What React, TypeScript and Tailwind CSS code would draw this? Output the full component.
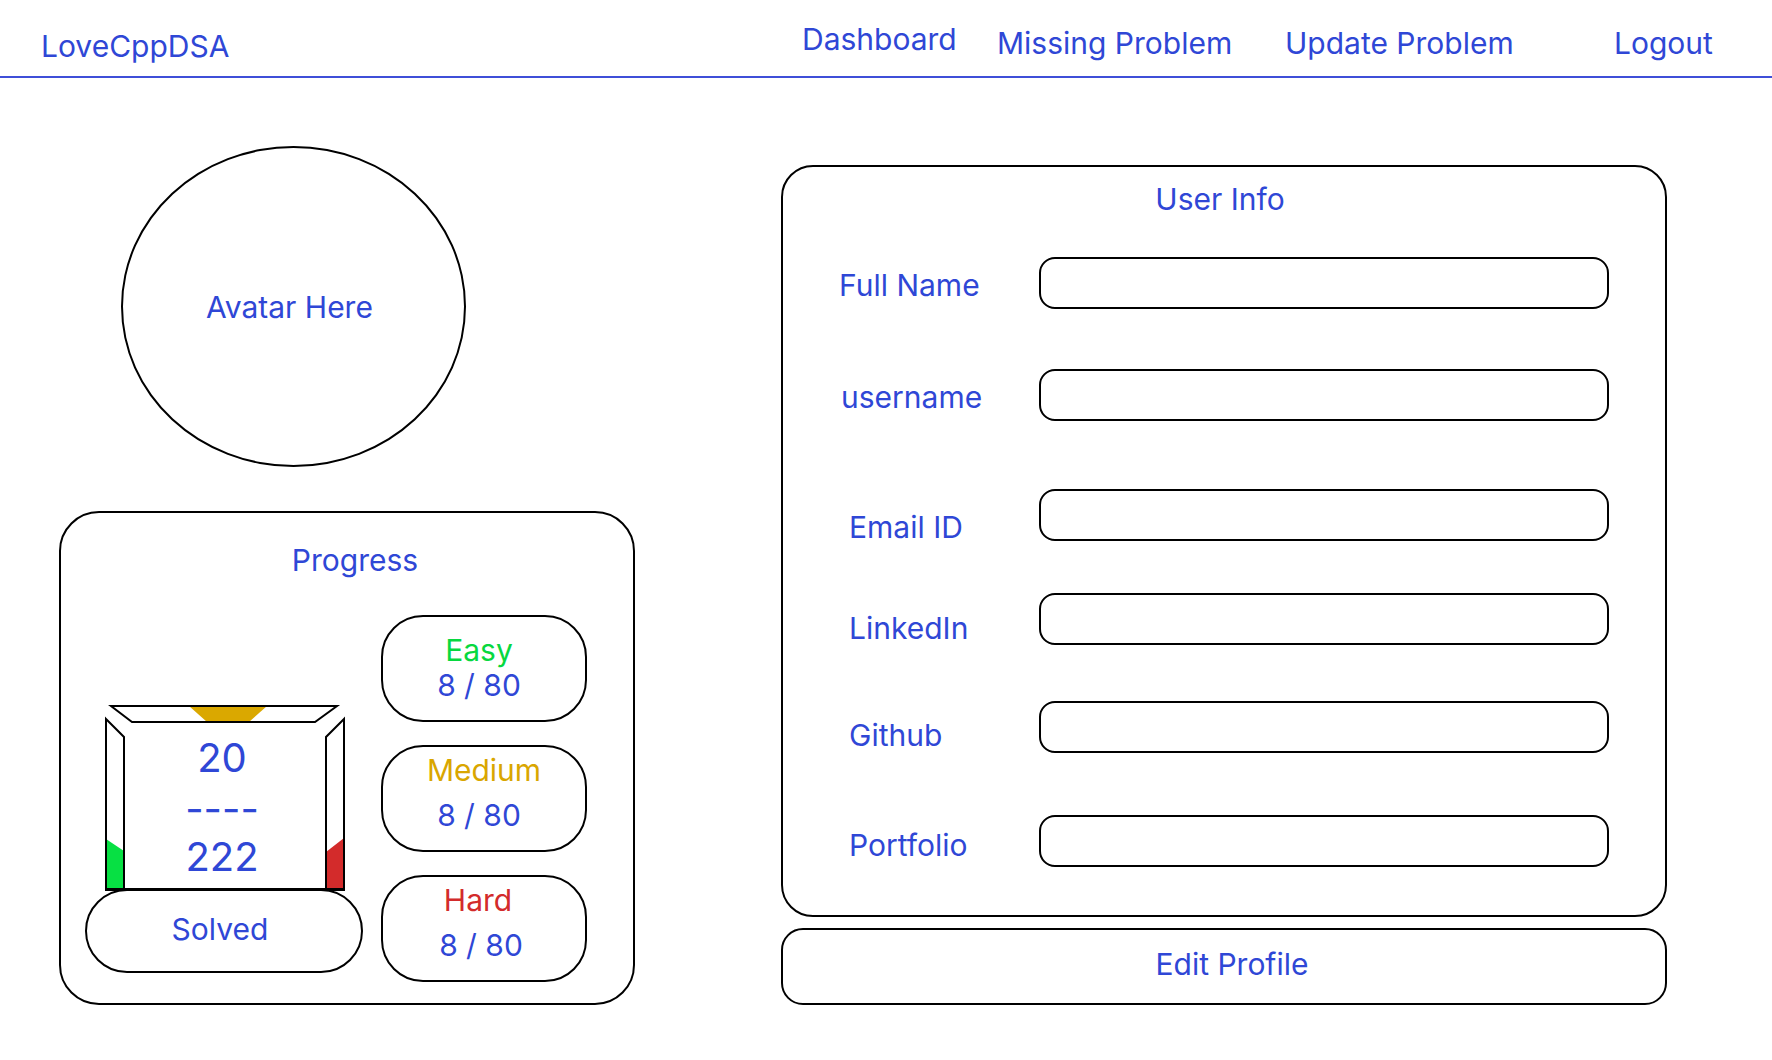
export default function App() {
  const rows = [
    { label: "Full Name", mt: "mt-[40px]", lt: "pt-[10px]", pl: "pl-[56px]" },
    { label: "username", mt: "mt-[60px]", lt: "pt-[10px]", pl: "pl-[58px]" },
    { label: "Email ID", mt: "mt-[68px]", lt: "pt-[20px]", pl: "pl-[66px]" },
    { label: "LinkedIn", mt: "mt-[52px]", lt: "pt-[17px]", pl: "pl-[66px]" },
    { label: "Github", mt: "mt-[56px]", lt: "pt-[16px]", pl: "pl-[66px]" },
    { label: "Portfolio", mt: "mt-[62px]", lt: "pt-[12px]", pl: "pl-[66px]" },
  ];
  return (
    <div className="w-[1772px] h-[1060px] bg-white [font-family:Inter,'Noto_Sans',sans-serif] text-[30px] text-[#2f47d6] overflow-hidden">
      <header className="flex h-[78px] border-b-2 border-[#3f4fd8] leading-[36px]">
        <div className="w-[802px] pl-[41px] pt-[28px]">LoveCppDSA</div>
        <div className="w-[195px] pt-[21px]">Dashboard</div>
        <div className="w-[288px] pt-[25px]">Missing Problem</div>
        <div className="w-[329px] pt-[25px]">Update Problem</div>
        <div className="pt-[25px]">Logout</div>
      </header>
      <main className="flex">
        <section className="w-[576px] ml-[59px] flex flex-col">
          <div className="ml-[62px] mt-[68px] w-[345px] h-[321px] rounded-[50%] border-2 border-black flex items-center justify-center pr-[8px] leading-[36px]">
            Avatar Here
          </div>
          <div className="mt-[44px] h-[494px] border-2 border-black rounded-[40px] flex flex-col">
            <div className="pt-[29px] h-[65px] leading-[36px] text-center pl-[16px]">Progress</div>
            <div className="flex items-start">
              <div className="ml-[24px] mt-[127px] w-[278px] flex flex-col">
                <div className="relative h-[184px]">
                  <svg className="absolute left-0 top-0" width="278" height="186" viewBox="0 0 278 186">
                    <polygon points="104,1 182,1 164,17 122,17" fill="#daa800" />
                    <polygon points="21,134 39,146 39,185 21,185" fill="#07e043" />
                    <polygon points="259,133 241,147 241,185 259,185" fill="#d32b2b" />
                    <g fill="none" stroke="#000" strokeWidth="2" strokeLinejoin="miter">
                      <polygon points="26,1 252,1 230,17 47,17" />
                      <polygon points="21,14 39,32 39,185 21,185" />
                      <polygon points="259,14 241,32 241,185 259,185" />
                      <line x1="21" y1="184" x2="259" y2="184" />
                    </g>
                  </svg>
                  <div className="relative ml-[37px] w-[200px] text-center text-[40px] leading-[50px] pt-[28px]">
                    <div>20</div>
                    <div className="mt-[1px]">----</div>
                    <div className="-mt-[2px]">222</div>
                  </div>
                </div>
                <div className="relative h-[84px] border-2 border-black rounded-[42px] bg-white flex items-center justify-center pr-[8px] pb-[4px] leading-[36px]">
                  Solved
                </div>
              </div>
              <div className="ml-[18px] mt-[37px] w-[206px] flex flex-col gap-[23px] leading-[36px]">
                <div className="h-[107px] border-2 border-black rounded-[42px] text-center pt-[15px] pr-[10px]">
                  <div className="text-[#07d83f]">Easy</div>
                  <div className="-mt-[1px]">8 / 80</div>
                </div>
                <div className="h-[107px] border-2 border-black rounded-[42px] text-center pt-[5px]">
                  <div className="text-[#d9a600]">Medium</div>
                  <div className="mt-[9px] pr-[10px]">8 / 80</div>
                </div>
                <div className="h-[107px] border-2 border-black rounded-[42px] text-center pt-[5px] pr-[6px]">
                  <div className="text-[#d32b2b] pr-[6px]">Hard</div>
                  <div className="mt-[9px]">8 / 80</div>
                </div>
              </div>
            </div>
          </div>
        </section>
        <section className="ml-[146px] w-[886px] flex flex-col">
          <div className="mt-[87px] h-[752px] border-2 border-black rounded-[32px] flex flex-col leading-[36px]">
            <div className="pt-[14px] text-center pr-[8px]">User Info</div>
            {rows.map((r) => (
              <div key={r.label} className={`flex h-[52px] ${r.mt}`}>
                <div className={`w-[256px] ${r.pl} ${r.lt}`}>{r.label}</div>
                <div className="w-[570px] h-[52px] border-2 border-black rounded-[16px]" />
              </div>
            ))}
          </div>
          <div className="mt-[11px] h-[77px] border-2 border-black rounded-[22px] flex items-center justify-center pl-[16px] pb-[6px] leading-[36px]">
            Edit Profile
          </div>
        </section>
      </main>
    </div>
  );
}
